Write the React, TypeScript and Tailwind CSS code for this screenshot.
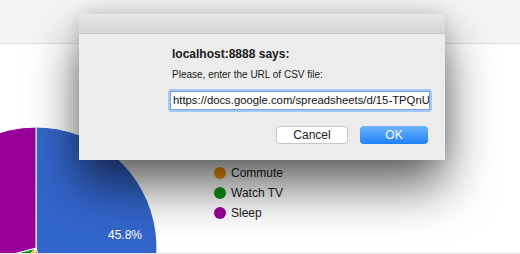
import React from "react";

const legend = [
  { label: "Commute", color: "bg-[#ff9900]" },
  { label: "Watch TV", color: "bg-[#109618]" },
  { label: "Sleep", color: "bg-[#990099]" },
];

const PieChart = () => (
  <svg width="160" height="209" className="shrink-0">
    <g stroke="#ffffff" strokeWidth="1">
      {/* Work */}
      <path d="M36 204 L36 83 A121 121 0 0 1 67.32 320.88 Z" fill="#3366cc" />
      {/* Eat */}
      <path d="M36 204 L67.32 320.88 A121 121 0 0 1 4.68 320.88 Z" fill="#dc3912" />
      {/* Commute */}
      <path d="M36 204 L4.68 320.88 A121 121 0 0 1 -49.56 289.56 Z" fill="#ff9900" />
      {/* Watch TV */}
      <path d="M36 204 L-49.56 289.56 A121 121 0 0 1 -80.88 235.32 Z" fill="#109618" />
      {/* Sleep */}
      <path d="M36 204 L-80.88 235.32 A121 121 0 0 1 36 83 Z" fill="#990099" />
    </g>
    <text x="125" y="195" textAnchor="middle" fill="#ffffff" fontSize="12" fontFamily="Liberation Sans, Arial, sans-serif">
      45.8%
    </text>
  </svg>
);

const PromptDialog = () => (
  <div className="absolute left-[79px] top-[14px] w-[366px] h-[146px] rounded-t-[5px] bg-[#ececec] shadow-[0_26px_50px_rgba(0,0,0,0.62),0_0_18px_rgba(0,0,0,0.14)] flex flex-col overflow-hidden">
    {/* title bar */}
    <div className="h-[20px] shrink-0 bg-gradient-to-b from-[#e9e9e9] to-[#d4d4d4] border-b border-[#cacaca]" />

    <div className="flex flex-col pl-[93px] pt-[13px]">
      <div className="text-[12px] leading-[15px] font-bold text-[#1a1a1a]">localhost:8888 says:</div>
      <div className="mt-[6px] text-[10px] leading-[13px] text-[#1a1a1a]">Please, enter the URL of CSV file:</div>

      <div className="mt-[8px] -ml-[4px] w-[264px] h-[23px] rounded-[4px] bg-[#a7c8f4] p-[2px]">
        <div className="h-full bg-white border border-[#72a2e2] pl-[2px] overflow-hidden whitespace-nowrap text-[11.3px] leading-[17px] text-[#111]">
          https://docs.google.com/spreadsheets/d/15-TPQnU
        </div>
      </div>

      <div className="mt-[14px] flex justify-end gap-[12px] pr-[17px]">
        <button className="w-[72px] h-[18px] rounded-[4px] bg-white border border-[#c6c6c6] text-[12px] leading-[16px] text-[#222]">
          Cancel
        </button>
        <button className="w-[68px] h-[18px] rounded-[4px] bg-gradient-to-b from-[#6bb4fb] to-[#1b7ff7] text-[12px] leading-[18px] text-white">
          OK
        </button>
      </div>
    </div>
  </div>
);

export default function App() {
  return (
    <div className="relative w-[520px] h-[254px] overflow-hidden bg-white flex flex-col font-['Liberation_Sans',Arial,sans-serif]">
      <div className="h-[44px] shrink-0 bg-[#f5f5f5] border-b border-[#dedede]" />

      <div className="flex-1 flex overflow-hidden">
        <PieChart />
        <div className="ml-[54px] mt-[119px] flex flex-col">
          {legend.map((item) => (
            <div key={item.label} className="h-[20px] flex items-center gap-[5px]">
              <span className={`w-[12px] h-[12px] rounded-full ${item.color}`} />
              <span className="text-[12px] text-[#222]">{item.label}</span>
            </div>
          ))}
        </div>
      </div>

      <div className="h-px shrink-0 bg-[#e3e3e3]" />

      <PromptDialog />
    </div>
  );
}
